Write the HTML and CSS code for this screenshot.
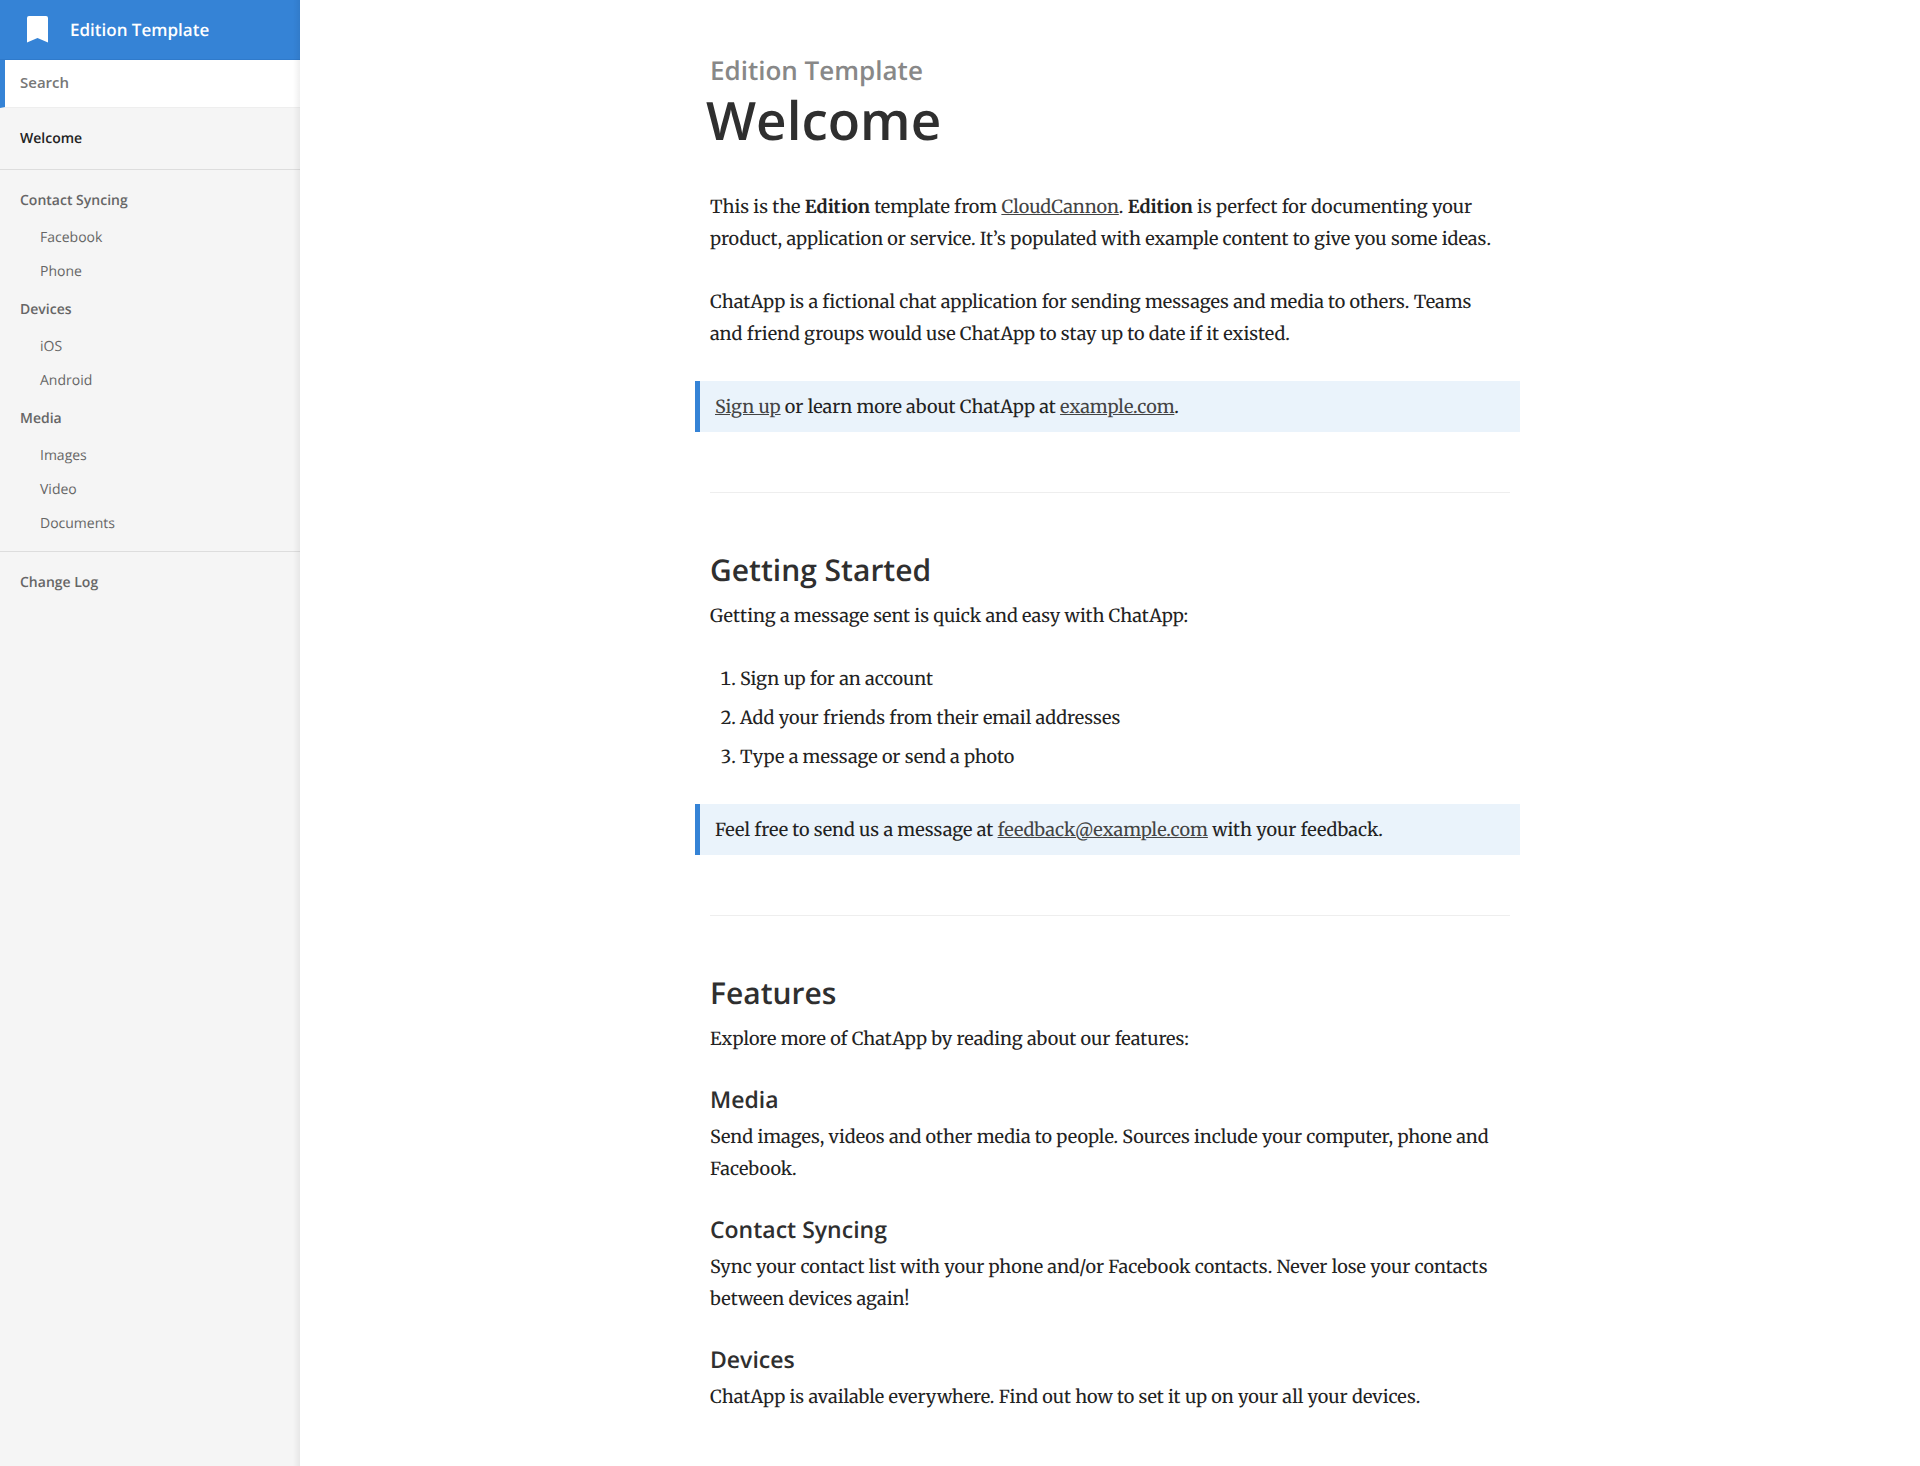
FILE: index.html
```
<!DOCTYPE html>
<html lang="en">
<head>
  <meta charset="UTF-8">
  <meta name="viewport" content="width=device-width, initial-scale=1.0">
  <title>Welcome | Edition Template</title>
  <link rel="stylesheet" href="styles.css">
</head>
<body>
  <header class="sidebar">
    <h1 class="brand">
      <a href="/">
        <svg width="40" height="40" viewBox="0 0 40 40" aria-hidden="true">
          <path fill="#fff" d="M11 6h17q2 0 2 2v24.500l-10.500-4.500L9 32.500V8q0-2 2-2z"/>
        </svg>
        Edition Template
      </a>
    </h1>
    <form class="search" action="/search/" method="get">
      <input type="text" name="q" placeholder="Search" aria-label="Search">
    </form>
    <nav>
      <ul class="nav-group">
        <li class="nav-item current"><a href="/">Welcome</a></li>
      </ul>
      <ul class="nav-group">
        <li class="nav-item">
          <a href="/contact-syncing/">Contact Syncing</a>
          <ul>
            <li><a href="/facebook/">Facebook</a></li>
            <li><a href="/phone/">Phone</a></li>
          </ul>
        </li>
        <li class="nav-item">
          <a href="/devices/">Devices</a>
          <ul>
            <li><a href="/ios/">iOS</a></li>
            <li><a href="/android/">Android</a></li>
          </ul>
        </li>
        <li class="nav-item">
          <a href="/media/">Media</a>
          <ul>
            <li><a href="/images/">Images</a></li>
            <li><a href="/video/">Video</a></li>
            <li><a href="/documents/">Documents</a></li>
          </ul>
        </li>
      </ul>
      <ul class="nav-group">
        <li class="nav-item"><a href="/change-log/">Change Log</a></li>
      </ul>
    </nav>
  </header>

  <section class="main">
    <div class="content">
      <div class="page-header">
        <h2>Edition Template</h2>
        <h3>Welcome</h3>
      </div>

      <p>This is the <strong>Edition</strong> template from <a href="/cloudcannon/">CloudCannon</a>. <strong>Edition</strong> is perfect for documenting your product, application or service. It’s populated with example content to give you some ideas.</p>
      <p>ChatApp is a fictional chat application for sending messages and media to others. Teams and friend groups would use ChatApp to stay up to date if it existed.</p>
      <blockquote>
        <a href="/signup/">Sign up</a> or learn more about ChatApp at <a href="/example/">example.com</a>.
      </blockquote>

      <hr>

      <h4>Getting Started</h4>
      <p>Getting a message sent is quick and easy with ChatApp:</p>
      <ol>
        <li>Sign up for an account</li>
        <li>Add your friends from their email addresses</li>
        <li>Type a message or send a photo</li>
      </ol>
      <blockquote>
        Feel free to send us a message at <a href="mailto:feedback@example.com">feedback@example.com</a> with your feedback.
      </blockquote>

      <hr>

      <h4>Features</h4>
      <p>Explore more of ChatApp by reading about our features:</p>

      <h5>Media</h5>
      <p>Send images, videos and other media to people. Sources include your computer, phone and Facebook.</p>

      <h5>Contact Syncing</h5>
      <p>Sync your contact list with your phone and/or Facebook contacts. Never lose your contacts between devices again!</p>

      <h5>Devices</h5>
      <p>ChatApp is available everywhere. Find out how to set it up on your all your devices.</p>
    </div>
  </section>
</body>
</html>
```
FILE: styles.css
```
* {
  margin: 0;
  padding: 0;
  box-sizing: border-box;
}
body {
  background: #fff;
  color: #222;
  font-family: Merriweather, "Liberation Serif", serif;
  font-size: 18px;
  line-height: 32px;
  text-rendering: geometricPrecision;
}

/* Sidebar */
.sidebar {
  position: fixed;
  top: 0;
  bottom: 0;
  left: 0;
  width: 300px;
  overflow-y: auto;
  background: #f5f5f5;
  font-family: "Open Sans", sans-serif;
  font-size: 14px;
}
.sidebar::after {
  content: "";
  position: absolute;
  top: 0;
  right: 0;
  bottom: 0;
  width: 7px;
  background: linear-gradient(to right, rgba(0,0,0,0), rgba(0,0,0,0.06));
}
.sidebar ul {
  list-style: none;
}
.sidebar a {
  display: block;
  color: #666;
  text-decoration: none;
}
.sidebar .brand {
  font-size: 17px;
  font-weight: 600;
}
.sidebar .brand a {
  display: flex;
  align-items: center;
  gap: 12px;
  height: 60px;
  padding: 0 18px;
  background: #3583d6;
  border-bottom: 1px solid #2f7acb;
  color: #fff;
}
.search input {
  display: block;
  width: 100%;
  height: 48px;
  padding: 0 15px 4px;
  background: #fff;
  border: 0;
  border-left: 5px solid #3583d6;
  border-bottom: 1px solid #eee;
  outline: none;
  font-family: "Open Sans", sans-serif;
  font-size: 15px;
  font-weight: 600;
}
.search input::placeholder {
  color: #777;
}
.nav-group {
  padding: 10px 0;
}
.nav-group + .nav-group {
  border-top: 1px solid #ddd;
}
.nav-item > a {
  padding: 0 20px;
  line-height: 41px;
  font-weight: 600;
}
.nav-item li a {
  padding: 0 40px;
  line-height: 34px;
}
.sidebar .current > a {
  color: #222;
}

/* Content */
.main {
  margin-left: 300px;
  padding: 50px 20px;
}
.content {
  max-width: 800px;
  margin: 0 auto;
}
.content a {
  color: #444;
}
.content p,
.content ol {
  margin-bottom: 31px;
  padding-right: 5px;
}
.page-header {
  margin-bottom: 41px;
}
h2, h3, h4, h5 {
  font-family: "Open Sans", sans-serif;
  font-weight: 600;
  color: #2f2f2f;
}
h2 {
  color: #888;
  font-size: 26px;
  line-height: 40px;
}
h3 {
  margin-left: -4px;
  font-size: 53px;
  line-height: 60px;
}
h4 {
  margin-bottom: 8px;
  font-size: 30px;
  line-height: 44px;
}
h5 {
  margin-bottom: 8px;
  font-size: 23px;
  line-height: 27px;
}
ol {
  padding-left: 30px;
}
ol li + li {
  margin-top: 7px;
}
blockquote {
  margin: 0 -10px 0 -15px;
  padding: 10px 15px 9px;
  background: #eaf3fb;
  border-left: 5px solid #3583d6;
}
hr {
  margin: 60px 0 55px;
  border: 0;
  border-top: 1px solid #eee;
}
```
